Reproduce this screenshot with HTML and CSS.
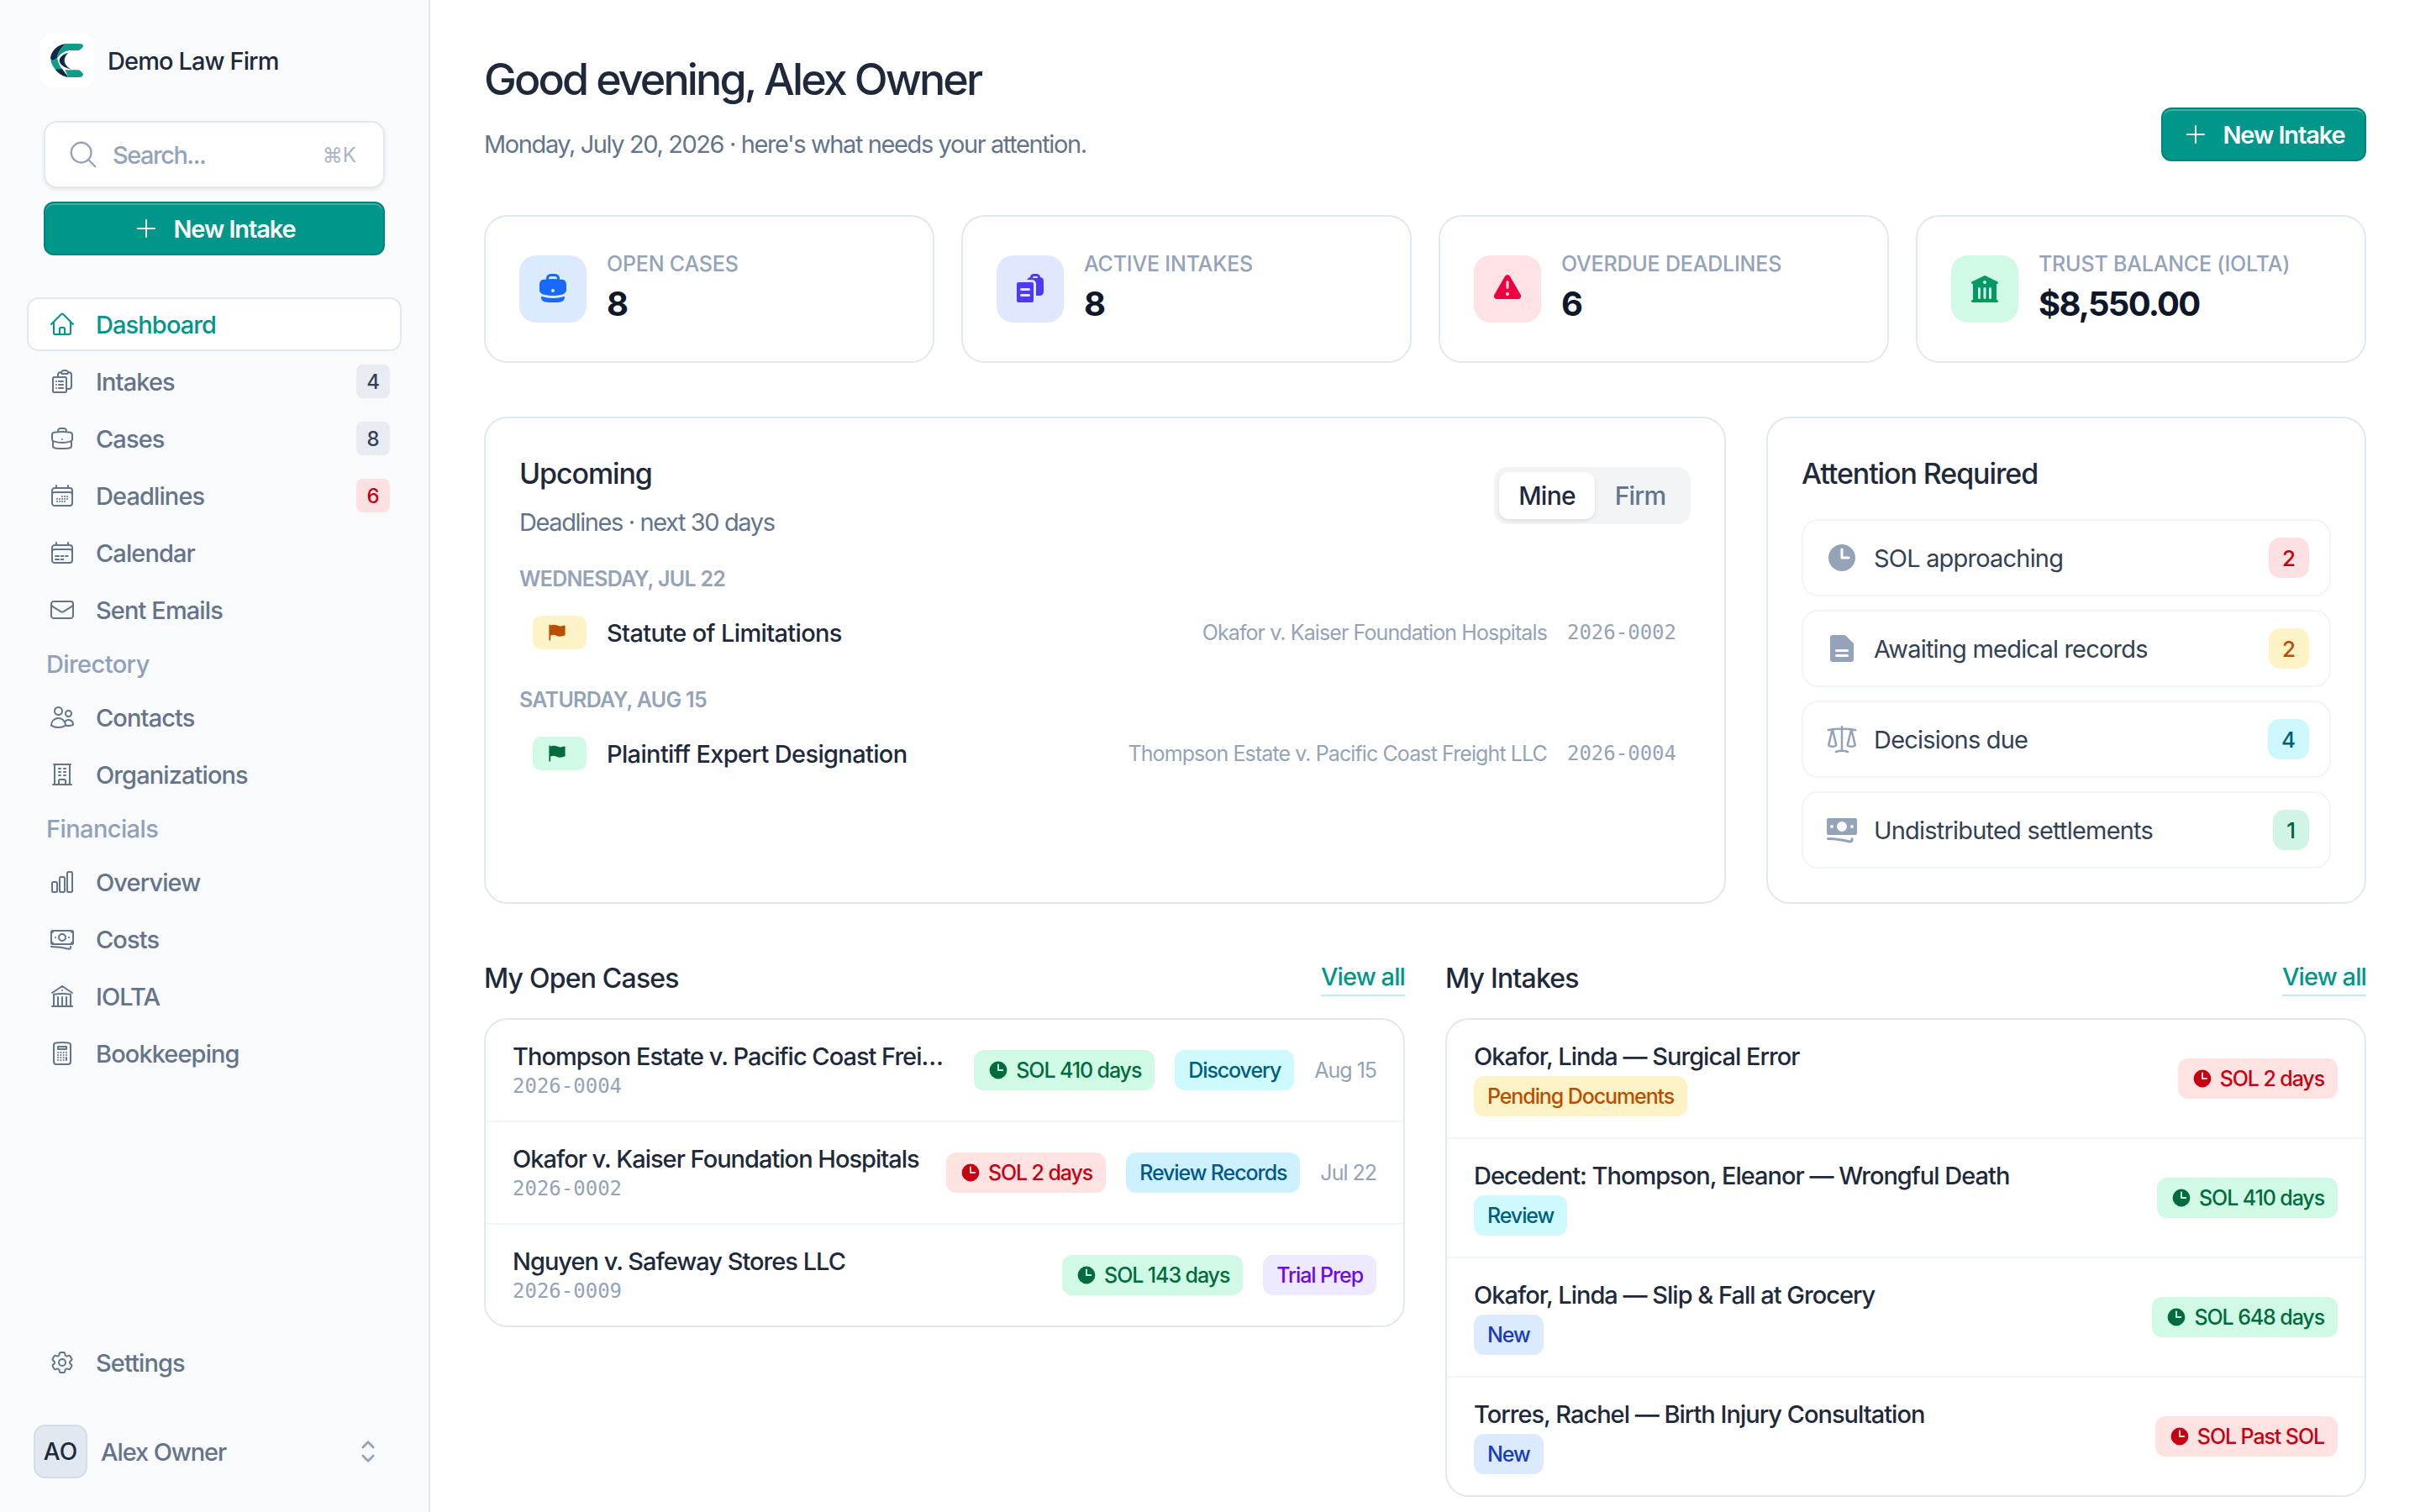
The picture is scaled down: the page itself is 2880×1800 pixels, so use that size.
FILE: index.html

```html
<!DOCTYPE html>
<html lang="en">
<head>
  <meta charset="UTF-8" />
  <title>Dashboard - Demo Law Firm</title>
  <link rel="stylesheet" href="styles.css">
</head>
<body>
<div class="app">
  <aside class="sidebar">
    <div class="brand">
      <div class="brand-logo">
        <svg viewBox="48 48 120 120" width="40" height="40">
          <path fill="#0f9d8a" d="M104 48H150Q165 48 165 56Q165 62 150 72H120C100 72 84 84 72 100C74 80 86 60 104 48Z"/>
          <path fill="#0f2a47" d="M104 48C72 52 50 74 48 100L56 110C58 108 66 104 72 100C74 80 86 60 104 48Z"/>
          <path fill="#0f9d8a" d="M48 100C50 120 60 134 70 146L92 142C82 130 75 116 72 100C66 104 60 108 56 110Z"/>
          <path fill="#0f2a47" d="M66 140C76 154 92 165 112 168C106 158 98 150 90 138Z"/>
          <path fill="#0f9d8a" d="M100 142H150Q160 148 165 156Q165 168 150 168H112C108 160 104 150 100 142Z"/>
          <path fill="#0f2a47" d="M112 80C92 86 80 96 80 108C80 122 98 134 122 140C106 130 98 120 98 108C98 96 104 88 112 80Z"/>
        </svg>
      </div>
      <span class="brand-name">Demo Law Firm</span>
    </div>

    <div class="search">
      <svg class="search-icon" viewBox="0 0 24 24"><path d="m21 21-5.197-5.197m0 0A7.5 7.5 0 1 0 5.196 5.196a7.5 7.5 0 0 0 10.607 10.607Z"/></svg>
      <span class="search-text">Search...</span>
      <span class="search-key">⌘K</span>
    </div>
    <div class="btn btn-wide">
      <svg class="ic-plus" viewBox="0 0 24 24"><path d="M12 4.500v15m7.500-7.500h-15"/></svg>
      New Intake
    </div>

    <nav class="nav">
      <a class="nav-item active"><svg viewBox="0 0 24 24"><path d="m2.250 12 8.954-8.955c.44-.439 1.152-.439 1.591 0L21.750 12M4.500 9.750v10.125c0 .621.504 1.125 1.125 1.125H9.750v-4.875c0-.621.504-1.125 1.125-1.125h2.250c.621 0 1.125.504 1.125 1.125V21h4.125c.621 0 1.125-.504 1.125-1.125V9.750M8.250 21h8.250"/></svg>Dashboard</a>
      <a class="nav-item"><svg viewBox="0 0 24 24"><path d="M9 12h3.750M9 15h3.750M9 18h3.750m3 .75H18a2.250 2.250 0 0 0 2.250-2.250V6.108c0-1.135-.845-2.098-1.976-2.192a48.424 48.424 0 0 0-1.123-.08m-5.801 0c-.065.21-.1.433-.1.664 0 .414.336.75.75.75h4.500a.75.75 0 0 0 .75-.75 2.250 2.250 0 0 0-.1-.664m-5.800 0A2.251 2.251 0 0 1 13.500 2.250H15c1.012 0 1.867.668 2.150 1.586m-5.800 0c-.376.023-.75.05-1.124.08C9.095 4.010 8.250 4.973 8.250 6.108V8.250m0 0H4.875c-.621 0-1.125.504-1.125 1.125v11.250c0 .621.504 1.125 1.125 1.125h9.750c.621 0 1.125-.504 1.125-1.125V9.375c0-.621-.504-1.125-1.125-1.125H8.250ZM6.750 12h.008v.008H6.750V12Zm0 3h.008v.008H6.750V15Zm0 3h.008v.008H6.750V18Z"/></svg>Intakes<span class="nav-badge">4</span></a>
      <a class="nav-item"><svg viewBox="0 0 24 24"><path d="M20.250 14.150v4.250c0 1.094-.787 2.036-1.872 2.180-2.087.277-4.216.42-6.378.42s-4.291-.143-6.378-.42c-1.085-.144-1.872-1.086-1.872-2.180v-4.250m16.500 0a2.180 2.180 0 0 0 .75-1.661V8.706c0-1.081-.768-2.015-1.837-2.175a48.114 48.114 0 0 0-3.413-.387m4.500 8.006c-.194.165-.42.295-.673.38A23.978 23.978 0 0 1 12 15.750c-2.648 0-5.195-.429-7.577-1.220a2.016 2.016 0 0 1-.673-.38m0 0A2.180 2.180 0 0 1 3 12.489V8.706c0-1.081.768-2.015 1.837-2.175a48.111 48.111 0 0 1 3.413-.387m7.500 0V5.250A2.250 2.250 0 0 0 13.500 3h-3a2.250 2.250 0 0 0-2.250 2.250v.894m7.500 0a48.667 48.667 0 0 0-7.500 0M12 12.750h.008v.008H12v-.008Z"/></svg>Cases<span class="nav-badge">8</span></a>
      <a class="nav-item"><svg viewBox="0 0 24 24"><path d="M6.750 3v2.250M17.250 3v2.250M3 18.750V7.500a2.250 2.250 0 0 1 2.250-2.250h13.500A2.250 2.250 0 0 1 21 7.500v11.250m-18 0A2.250 2.250 0 0 0 5.250 21h13.500A2.250 2.250 0 0 0 21 18.750m-18 0v-7.500A2.250 2.250 0 0 1 5.250 9h13.500A2.250 2.250 0 0 1 21 11.250v7.500m-9-6h.008v.008H12v-.008ZM12 15h.008v.008H12V15Zm0 2.250h.008v.008H12v-.008ZM9.750 15h.008v.008H9.750V15Zm0 2.250h.008v.008H9.750v-.008ZM7.500 15h.008v.008H7.500V15Zm0 2.250h.008v.008H7.500v-.008Zm6.750-4.500h.008v.008h-.008v-.008Zm0 2.250h.008v.008h-.008V15Zm0 2.250h.008v.008h-.008v-.008Zm2.250-4.500h.008v.008H16.500v-.008Zm0 2.250h.008v.008H16.500V15Z"/></svg>Deadlines<span class="nav-badge nav-badge-red">6</span></a>
      <a class="nav-item"><svg viewBox="0 0 24 24"><path d="M6.750 3v2.250M17.250 3v2.250M3 18.750V7.500a2.250 2.250 0 0 1 2.250-2.250h13.500A2.250 2.250 0 0 1 21 7.500v11.250m-18 0A2.250 2.250 0 0 0 5.250 21h13.500A2.250 2.250 0 0 0 21 18.750m-18 0v-7.500A2.250 2.250 0 0 1 5.250 9h13.500A2.250 2.250 0 0 1 21 11.250v7.500m-15-3.750h3m2 0h2m2 0h2m-11 3h3m2 0h2"/></svg>Calendar</a>
      <a class="nav-item"><svg viewBox="0 0 24 24"><path d="M21.750 6.750v10.500a2.250 2.250 0 0 1-2.250 2.250h-15a2.250 2.250 0 0 1-2.250-2.250V6.750m19.500 0A2.250 2.250 0 0 0 19.500 4.500h-15a2.250 2.250 0 0 0-2.250 2.250m19.500 0v.243a2.250 2.250 0 0 1-1.070 1.916l-7.500 4.615a2.250 2.250 0 0 1-2.360 0L3.320 8.910a2.250 2.250 0 0 1-1.070-1.916V6.750"/></svg>Sent Emails</a>

      <div class="nav-label">Directory</div>
      <a class="nav-item"><svg viewBox="0 0 24 24"><path d="M15 19.128a9.380 9.380 0 0 0 2.625.372 9.337 9.337 0 0 0 4.121-.952 4.125 4.125 0 0 0-7.533-2.493M15 19.128v-.003c0-1.113-.285-2.160-.786-3.070M15 19.128v.106A12.318 12.318 0 0 1 8.624 21c-2.331 0-4.512-.645-6.374-1.766l-.001-.109a6.375 6.375 0 0 1 11.964-3.070M12 6.375a3.375 3.375 0 1 1-6.750 0 3.375 3.375 0 0 1 6.750 0Zm8.250 2.250a2.625 2.625 0 1 1-5.250 0 2.625 2.625 0 0 1 5.250 0Z"/></svg>Contacts</a>
      <a class="nav-item"><svg viewBox="0 0 24 24"><path d="M3.750 21h16.500M4.500 3h15M5.250 3v18m13.500-18v18M9 6.750h1.500m-1.500 3h1.500m-1.500 3h1.500m3-6H15m-1.500 3H15m-1.500 3H15M9 21v-3.375c0-.621.504-1.125 1.125-1.125h3.750c.621 0 1.125.504 1.125 1.125V21"/></svg>Organizations</a>

      <div class="nav-label">Financials</div>
      <a class="nav-item"><svg viewBox="0 0 24 24"><path d="M3 13.125C3 12.504 3.504 12 4.125 12h2.250c.621 0 1.125.504 1.125 1.125v6.750C7.500 20.496 6.996 21 6.375 21h-2.250A1.125 1.125 0 0 1 3 19.875v-6.750ZM9.750 8.625c0-.621.504-1.125 1.125-1.125h2.250c.621 0 1.125.504 1.125 1.125v11.250c0 .621-.504 1.125-1.125 1.125h-2.250a1.125 1.125 0 0 1-1.125-1.125V8.625ZM16.500 4.125c0-.621.504-1.125 1.125-1.125h2.250C20.496 3 21 3.504 21 4.125v15.750c0 .621-.504 1.125-1.125 1.125h-2.250a1.125 1.125 0 0 1-1.125-1.125V4.125Z"/></svg>Overview</a>
      <a class="nav-item"><svg viewBox="0 0 24 24"><path d="M2.250 18.750a60.070 60.070 0 0 1 15.797 2.101c.727.198 1.453-.342 1.453-1.096V18.750M3.750 4.500v.75A.75.75 0 0 1 3 6h-.75m0 0v-.375c0-.621.504-1.125 1.125-1.125H20.250M2.250 6v9m18-10.500v.75c0 .414.336.75.75.75h.75m-1.500-1.500h.375c.621 0 1.125.504 1.125 1.125v9.750c0 .621-.504 1.125-1.125 1.125h-.375m1.500-1.500H21a.75.75 0 0 0-.75.75v.75m0 0H3.750m0 0h-.375a1.125 1.125 0 0 1-1.125-1.125V15m1.500 1.500v-.75A.75.75 0 0 0 3 15h-.75M15 10.500a3 3 0 1 1-6 0 3 3 0 0 1 6 0Zm3 0h.008v.008H18V10.500Zm-12 0h.008v.008H6V10.500Z"/></svg>Costs</a>
      <a class="nav-item"><svg viewBox="0 0 24 24"><path d="M12 21v-8.250M15.750 21v-8.250M8.250 21v-8.250M3 9l9-6 9 6m-1.500 12V10.332A48.360 48.360 0 0 0 12 9.750c-2.551 0-5.056.2-7.500.582V21M3 21h18M12 6.750h.008v.008H12V6.750Z"/></svg>IOLTA</a>
      <a class="nav-item"><svg viewBox="0 0 24 24"><path d="M15.750 15.750V18m-7.500-6.750h.008v.008H8.250v-.008Zm0 2.250h.008v.008H8.250V13.500Zm0 2.250h.008v.008H8.250v-.008Zm0 2.250h.008v.008H8.250V18Zm2.498-6.750h.007v.008h-.007v-.008Zm0 2.250h.007v.008h-.007V13.500Zm0 2.250h.007v.008h-.007v-.008Zm0 2.250h.007v.008h-.007V18Zm2.504-6.750h.008v.008h-.008v-.008Zm0 2.250h.008v.008h-.008V13.500Zm0 2.250h.008v.008h-.008v-.008Zm0 2.250h.008v.008h-.008V18Zm2.498-6.750h.008v.008h-.008v-.008Zm0 2.250h.008v.008h-.008V13.500ZM8.250 6h7.500v2.250h-7.500V6ZM12 2.250c-1.892 0-3.758.11-5.593.322C5.307 2.700 4.500 3.650 4.500 4.757V19.500a2.250 2.250 0 0 0 2.250 2.250h10.500a2.250 2.250 0 0 0 2.250-2.250V4.757c0-1.108-.806-2.057-1.907-2.185A48.507 48.507 0 0 0 12 2.250Z"/></svg>Bookkeeping</a>
    </nav>

    <div class="sidebar-foot">
      <a class="nav-item"><svg viewBox="0 0 24 24"><path d="M9.594 3.940c.09-.542.56-.94 1.110-.94h2.593c.55 0 1.020.398 1.110.94l.213 1.281c.063.374.313.686.645.87.074.04.147.083.22.127.325.196.72.257 1.075.124l1.217-.456a1.125 1.125 0 0 1 1.370.49l1.296 2.247a1.125 1.125 0 0 1-.26 1.431l-1.003.827c-.293.241-.438.613-.43.992a7.723 7.723 0 0 1 0 .255c-.008.378.137.75.43.991l1.004.827c.424.35.534.955.26 1.430l-1.298 2.247a1.125 1.125 0 0 1-1.369.491l-1.217-.456c-.355-.133-.75-.072-1.076.124a6.470 6.470 0 0 1-.22.128c-.331.183-.581.495-.644.869l-.213 1.281c-.09.543-.56.94-1.110.94h-2.594c-.55 0-1.019-.398-1.110-.94l-.213-1.281c-.062-.374-.312-.686-.644-.87a6.520 6.520 0 0 1-.22-.127c-.325-.196-.72-.257-1.076-.124l-1.217.456a1.125 1.125 0 0 1-1.369-.49l-1.297-2.247a1.125 1.125 0 0 1 .26-1.431l1.004-.827c.292-.24.437-.613.43-.991a6.932 6.932 0 0 1 0-.255c.007-.38-.138-.751-.43-.992l-1.004-.827a1.125 1.125 0 0 1-.26-1.430l1.297-2.247a1.125 1.125 0 0 1 1.370-.491l1.216.456c.356.133.751.072 1.076-.124.072-.044.146-.086.22-.128.332-.183.582-.495.644-.869l.214-1.280Z"/><path d="M15 12a3 3 0 1 1-6 0 3 3 0 0 1 6 0Z"/></svg>Settings</a>
      <div class="user">
        <div class="avatar">AO</div>
        <span class="user-name">Alex Owner</span>
        <svg class="user-chev" viewBox="0 0 24 24"><path d="M8.250 15 12 18.750 15.750 15m-7.500-6L12 5.250 15.750 9"/></svg>
      </div>
    </div>
  </aside>

  <main class="main">
    <header class="page-head">
      <div>
        <h1>Good evening, Alex Owner</h1>
        <p class="page-sub">Monday, July 20, 2026 · here's what needs your attention.</p>
      </div>
      <div class="btn btn-top">
        <svg class="ic-plus" viewBox="0 0 24 24"><path d="M12 4.500v15m7.500-7.500h-15"/></svg>
        New Intake
      </div>
    </header>

    <section class="stats">
      <div class="stat">
        <div class="stat-icon blue"><svg viewBox="0 0 20 20"><path fill-rule="evenodd" d="M6 3.750A2.750 2.750 0 0 1 8.750 1h2.500A2.750 2.750 0 0 1 14 3.750v.443c.572.055 1.140.122 1.706.2C17.053 4.582 18 5.750 18 7.070v3.469c0 1.126-.694 2.191-1.830 2.540-1.952.599-4.024.921-6.170.921s-4.219-.322-6.170-.921C2.694 12.730 2 11.665 2 10.539V7.070c0-1.321.947-2.489 2.294-2.676A41.047 41.047 0 0 1 6 4.193V3.750Zm6.500 0v.325a41.622 41.622 0 0 0-5 0V3.750c0-.69.56-1.250 1.250-1.250h2.500c.69 0 1.250.56 1.250 1.250ZM10 10a1 1 0 0 0-1 1v.01a1 1 0 0 0 1 1h.01a1 1 0 0 0 1-1V11a1 1 0 0 0-1-1H10Z"/><path d="M3 15.055v-.684c.126.053.255.1.39.142 2.092.642 4.313.987 6.610.987 2.297 0 4.518-.345 6.610-.987.135-.041.264-.089.39-.142v.684c0 1.347-.985 2.530-2.363 2.686a41.454 41.454 0 0 1-9.274 0C3.985 17.585 3 16.402 3 15.055Z"/></svg></div>
        <div><div class="stat-label">OPEN CASES</div><div class="stat-value">8</div></div>
      </div>
      <div class="stat">
        <div class="stat-icon indigo"><svg viewBox="0 0 20 20"><path fill-rule="evenodd" d="M15.988 3.012A2.250 2.250 0 0 1 18 5.250v6.500A2.250 2.250 0 0 1 15.750 14H13.500V7A2.500 2.500 0 0 0 11 4.500H8.128a2.252 2.252 0 0 1 1.884-1.488A2.250 2.250 0 0 1 12.250 1h1.500a2.250 2.250 0 0 1 2.238 2.012ZM11.500 3.250a.75.75 0 0 1 .75-.75h1.500a.75.75 0 0 1 .75.75v.25h-3v-.25Z"/><path fill-rule="evenodd" d="M2 7a1 1 0 0 1 1-1h8a1 1 0 0 1 1 1v10a1 1 0 0 1-1 1H3a1 1 0 0 1-1-1V7Zm2 3.250a.75.75 0 0 1 .75-.75h4.500a.75.75 0 0 1 0 1.500h-4.500a.75.75 0 0 1-.75-.75Zm0 3.500a.75.75 0 0 1 .75-.75h4.500a.75.75 0 0 1 0 1.500h-4.500a.75.75 0 0 1-.75-.75Z"/></svg></div>
        <div><div class="stat-label">ACTIVE INTAKES</div><div class="stat-value">8</div></div>
      </div>
      <div class="stat">
        <div class="stat-icon rose"><svg viewBox="0 0 20 20"><path fill-rule="evenodd" d="M8.485 2.495c.673-1.167 2.357-1.167 3.030 0l6.280 10.875c.673 1.167-.17 2.625-1.516 2.625H3.720c-1.347 0-2.189-1.458-1.515-2.625L8.485 2.495ZM10 5a.75.75 0 0 1 .75.75v3.500a.75.75 0 0 1-1.500 0v-3.500A.75.75 0 0 1 10 5Zm0 9a1 1 0 1 0 0-2 1 1 0 0 0 0 2Z"/></svg></div>
        <div><div class="stat-label">OVERDUE DEADLINES</div><div class="stat-value">6</div></div>
      </div>
      <div class="stat">
        <div class="stat-icon green"><svg viewBox="0 0 20 20"><path fill-rule="evenodd" d="M9.674 2.075a.75.75 0 0 1 .652 0l7.250 3.500A.75.75 0 0 1 17 6.957V16.500h.25a.75.75 0 0 1 0 1.500H2.750a.75.75 0 0 1 0-1.500H3V6.957a.75.75 0 0 1-.576-1.382l7.250-3.500ZM11 6a1 1 0 1 1-2 0 1 1 0 0 1 2 0ZM7.500 9.750a.75.75 0 0 0-1.500 0v5.500a.75.75 0 0 0 1.500 0v-5.500Zm3.250 0a.75.75 0 0 0-1.500 0v5.500a.75.75 0 0 0 1.500 0v-5.500Zm3.250 0a.75.75 0 0 0-1.500 0v5.500a.75.75 0 0 0 1.500 0v-5.500Z"/></svg></div>
        <div><div class="stat-label">TRUST BALANCE (IOLTA)</div><div class="stat-value">$8,550.00</div></div>
      </div>
    </section>

    <section class="middle">
      <div class="card upcoming">
        <div class="upcoming-head">
          <div>
            <h2>Upcoming</h2>
            <p class="upcoming-sub">Deadlines · next 30 days</p>
          </div>
          <div class="toggle"><span class="toggle-on">Mine</span><span class="toggle-off">Firm</span></div>
        </div>
        <div class="day">WEDNESDAY, JUL 22</div>
        <div class="deadline">
          <span class="flag amber"><svg viewBox="0 0 20 20"><path d="M3.500 2.750a.75.75 0 0 0-1.500 0v14.500a.75.75 0 0 0 1.500 0v-4.392l1.657-.348a6.449 6.449 0 0 1 4.271.572 7.948 7.948 0 0 0 5.965.524l2.078-.64A.75.75 0 0 0 18 12.250v-8.500a.75.75 0 0 0-.904-.734l-2.380.501a7.250 7.250 0 0 1-4.186-.363l-.502-.2a8.750 8.750 0 0 0-5.053-.439l-1.475.31V2.750Z"/></svg></span>
          <span class="deadline-name">Statute of Limitations</span>
          <span class="deadline-case">Okafor v. Kaiser Foundation Hospitals</span>
          <span class="mono">2026-0002</span>
        </div>
        <div class="day day-next">SATURDAY, AUG 15</div>
        <div class="deadline">
          <span class="flag mint"><svg viewBox="0 0 20 20"><path d="M3.500 2.750a.75.75 0 0 0-1.500 0v14.500a.75.75 0 0 0 1.500 0v-4.392l1.657-.348a6.449 6.449 0 0 1 4.271.572 7.948 7.948 0 0 0 5.965.524l2.078-.64A.75.75 0 0 0 18 12.250v-8.500a.75.75 0 0 0-.904-.734l-2.380.501a7.250 7.250 0 0 1-4.186-.363l-.502-.2a8.750 8.750 0 0 0-5.053-.439l-1.475.31V2.750Z"/></svg></span>
          <span class="deadline-name">Plaintiff Expert Designation</span>
          <span class="deadline-case">Thompson Estate v. Pacific Coast Freight LLC</span>
          <span class="mono">2026-0004</span>
        </div>
      </div>

      <div class="card attention">
        <h2>Attention Required</h2>
        <div class="att-list">
          <div class="att-row">
            <svg class="att-icon" viewBox="0 0 20 20"><path fill-rule="evenodd" d="M10 18a8 8 0 1 0 0-16 8 8 0 0 0 0 16Zm.75-13a.75.75 0 0 0-1.500 0v5c0 .414.336.75.75.75h4a.75.75 0 0 0 0-1.500h-3.250V5Z"/></svg>
            <span class="att-text">SOL approaching</span><span class="att-count c-red">2</span>
          </div>
          <div class="att-row">
            <svg class="att-icon" viewBox="0 0 20 20"><path fill-rule="evenodd" d="M4.500 2A1.500 1.500 0 0 0 3 3.500v13A1.500 1.500 0 0 0 4.500 18h11a1.500 1.500 0 0 0 1.500-1.500V7.621a1.500 1.500 0 0 0-.44-1.060l-4.120-4.122A1.500 1.500 0 0 0 11.378 2H4.500Zm2.250 8.500a.75.75 0 0 0 0 1.500h6.500a.75.75 0 0 0 0-1.500h-6.500Zm0 3a.75.75 0 0 0 0 1.500h6.500a.75.75 0 0 0 0-1.500h-6.500Z"/></svg>
            <span class="att-text">Awaiting medical records</span><span class="att-count c-amber">2</span>
          </div>
          <div class="att-row">
            <svg class="att-icon att-line" viewBox="0 0 24 24"><path d="M12 3v17.250m0 0c-1.472 0-2.882.265-4.185.75M12 20.250c1.472 0 2.882.265 4.185.75M18.750 4.970A48.416 48.416 0 0 0 12 4.500c-2.291 0-4.545.16-6.750.47m13.500 0c1.010.143 2.010.317 3 .52m-3-.52 2.620 10.726c.122.499-.106 1.028-.589 1.202a5.988 5.988 0 0 1-2.031.352 5.988 5.988 0 0 1-2.031-.352c-.483-.174-.711-.703-.589-1.202L18.750 4.971Zm-16.500.52c.99-.203 1.990-.377 3-.52m0 0 2.620 10.726c.122.499-.106 1.028-.589 1.202a5.989 5.989 0 0 1-2.031.352 5.989 5.989 0 0 1-2.031-.352c-.483-.174-.711-.703-.589-1.202L5.250 4.971Z"/></svg>
            <span class="att-text">Decisions due</span><span class="att-count c-cyan">4</span>
          </div>
          <div class="att-row">
            <svg class="att-icon" viewBox="0 0 20 20"><path fill-rule="evenodd" d="M1 4a1 1 0 0 1 1-1h16a1 1 0 0 1 1 1v8a1 1 0 0 1-1 1H2a1 1 0 0 1-1-1V4Zm12 4a3 3 0 1 1-6 0 3 3 0 0 1 6 0ZM4 9a1 1 0 1 0 0-2 1 1 0 0 0 0 2Zm13-1a1 1 0 1 1-2 0 1 1 0 0 1 2 0ZM1.750 14.500a.75.75 0 0 0 0 1.500c4.417 0 8.693.603 12.749 1.730 1.111.309 2.251-.512 2.251-1.696v-.784a.75.75 0 0 0-1.500 0v.784a.272.272 0 0 1-.35.25A49.043 49.043 0 0 0 1.750 14.500Z"/></svg>
            <span class="att-text">Undistributed settlements</span><span class="att-count c-green">1</span>
          </div>
        </div>
      </div>
    </section>

    <section class="lists">
      <div>
        <div class="list-head"><h3>My Open Cases</h3><a class="view-all">View all</a></div>
        <div class="list-card">
          <div class="case-row">
            <div class="case-main"><div class="case-title">Thompson Estate v. Pacific Coast Freight LLC</div><div class="mono">2026-0004</div></div>
            <span class="pill p-green"><svg viewBox="0 0 20 20"><path fill-rule="evenodd" d="M10 18a8 8 0 1 0 0-16 8 8 0 0 0 0 16Zm.75-13a.75.75 0 0 0-1.500 0v5c0 .414.336.75.75.75h4a.75.75 0 0 0 0-1.500h-3.250V5Z"/></svg>SOL 410 days</span>
            <span class="pill p-cyan">Discovery</span>
            <span class="case-date">Aug 15</span>
          </div>
          <div class="case-row">
            <div class="case-main"><div class="case-title">Okafor v. Kaiser Foundation Hospitals</div><div class="mono">2026-0002</div></div>
            <span class="pill p-red"><svg viewBox="0 0 20 20"><path fill-rule="evenodd" d="M10 18a8 8 0 1 0 0-16 8 8 0 0 0 0 16Zm.75-13a.75.75 0 0 0-1.500 0v5c0 .414.336.75.75.75h4a.75.75 0 0 0 0-1.500h-3.250V5Z"/></svg>SOL 2 days</span>
            <span class="pill p-sky">Review Records</span>
            <span class="case-date">Jul 22</span>
          </div>
          <div class="case-row">
            <div class="case-main"><div class="case-title">Nguyen v. Safeway Stores LLC</div><div class="mono">2026-0009</div></div>
            <span class="pill p-green"><svg viewBox="0 0 20 20"><path fill-rule="evenodd" d="M10 18a8 8 0 1 0 0-16 8 8 0 0 0 0 16Zm.75-13a.75.75 0 0 0-1.500 0v5c0 .414.336.75.75.75h4a.75.75 0 0 0 0-1.500h-3.250V5Z"/></svg>SOL 143 days</span>
            <span class="pill p-purple">Trial Prep</span>
          </div>
        </div>
      </div>

      <div>
        <div class="list-head"><h3>My Intakes</h3><a class="view-all">View all</a></div>
        <div class="list-card">
          <div class="intake-row">
            <div class="case-main"><div class="case-title">Okafor, Linda — Surgical Error</div><span class="pill p-amber">Pending Documents</span></div>
            <span class="pill p-red"><svg viewBox="0 0 20 20"><path fill-rule="evenodd" d="M10 18a8 8 0 1 0 0-16 8 8 0 0 0 0 16Zm.75-13a.75.75 0 0 0-1.500 0v5c0 .414.336.75.75.75h4a.75.75 0 0 0 0-1.500h-3.250V5Z"/></svg>SOL 2 days</span>
          </div>
          <div class="intake-row">
            <div class="case-main"><div class="case-title">Decedent: Thompson, Eleanor — Wrongful Death</div><span class="pill p-cyan">Review</span></div>
            <span class="pill p-green"><svg viewBox="0 0 20 20"><path fill-rule="evenodd" d="M10 18a8 8 0 1 0 0-16 8 8 0 0 0 0 16Zm.75-13a.75.75 0 0 0-1.500 0v5c0 .414.336.75.75.75h4a.75.75 0 0 0 0-1.500h-3.250V5Z"/></svg>SOL 410 days</span>
          </div>
          <div class="intake-row">
            <div class="case-main"><div class="case-title">Okafor, Linda — Slip &amp; Fall at Grocery</div><span class="pill p-blue">New</span></div>
            <span class="pill p-green"><svg viewBox="0 0 20 20"><path fill-rule="evenodd" d="M10 18a8 8 0 1 0 0-16 8 8 0 0 0 0 16Zm.75-13a.75.75 0 0 0-1.500 0v5c0 .414.336.75.75.75h4a.75.75 0 0 0 0-1.500h-3.250V5Z"/></svg>SOL 648 days</span>
          </div>
          <div class="intake-row">
            <div class="case-main"><div class="case-title">Torres, Rachel — Birth Injury Consultation</div><span class="pill p-blue">New</span></div>
            <span class="pill p-red"><svg viewBox="0 0 20 20"><path fill-rule="evenodd" d="M10 18a8 8 0 1 0 0-16 8 8 0 0 0 0 16Zm.75-13a.75.75 0 0 0-1.500 0v5c0 .414.336.75.75.75h4a.75.75 0 0 0 0-1.500h-3.250V5Z"/></svg>SOL Past SOL</span>
          </div>
        </div>
      </div>
    </section>
  </main>
</div>
</body>
</html>
```

FILE: styles.css

```css
* {
  box-sizing: border-box;
}
body {
  margin: 0;
  background: #fff;
  font-family: Inter, "Noto Sans", sans-serif;
  color: #1e293b;
}
h1, h2, h3, p {
  margin: 0;
}
svg {
  flex: none;
  display: block;
}

.app {
  display: flex;
  height: 1800px;
  overflow: hidden;
}

/* sidebar */
.sidebar {
  width: 512px;
  flex: none;
  display: flex;
  flex-direction: column;
  background: #f8fafc;
  border-right: 2px solid #e2e8f0;
  padding: 40px 32px 40px 32px;
}
.brand {
  display: flex;
  align-items: center;
  gap: 16px;
  margin-left: 16px;
  height: 64px;
}
.brand-logo {
  width: 64px;
  height: 64px;
  background: #fff;
  border-radius: 14px;
  display: flex;
  align-items: center;
  justify-content: center;
}
.brand-name {
  font-size: 29px;
  font-weight: 500;
  letter-spacing: -0.9px;
  color: #1e293b;
}
.search {
  display: flex;
  align-items: center;
  width: 406px;
  height: 80px;
  margin: 40px 0 0 20px;
  padding: 0 32px 0 26px;
  background: #fff;
  border: 2px solid #e2e8f0;
  border-radius: 16px;
  box-shadow: 0 2px 4px rgba(15, 23, 42, 0.08);
}
.search-icon {
  width: 38px;
  height: 38px;
  fill: none;
  stroke: #94a3b8;
  stroke-width: 1.5;
  stroke-linecap: round;
}
.search-text {
  margin-left: 16px;
  font-size: 29px;
  font-weight: 500;
  letter-spacing: -1.5px;
  color: #94a3b8;
}
.search-key {
  margin-left: auto;
  font-size: 24px;
  color: #a8b5c7;
}
.btn {
  display: flex;
  align-items: center;
  justify-content: center;
  gap: 16px;
  height: 64px;
  background: #009689;
  border: 2px solid #008578;
  border-radius: 12px;
  box-shadow: inset 0 2px 0 rgba(255, 255, 255, 0.25);
  color: #fff;
  font-size: 29px;
  font-weight: 600;
  letter-spacing: -1.1px;
}
.btn-wide {
  width: 406px;
  margin: 16px 0 0 20px;
}
.btn-top {
  width: 244px;
  align-self: flex-end;
}
.ic-plus {
  width: 32px;
  height: 32px;
  fill: none;
  stroke: #fff;
  stroke-width: 1.5;
  stroke-linecap: round;
}
.nav {
  display: flex;
  flex-direction: column;
  gap: 4px;
  margin-top: 50px;
  flex: 1;
}
.nav-item {
  display: flex;
  align-items: center;
  gap: 24px;
  height: 64px;
  padding: 0 12px 0 24px;
  border: 2px solid transparent;
  border-radius: 14px;
  font-size: 29px;
  font-weight: 500;
  letter-spacing: -0.9px;
  color: #64748b;
}
.nav-item svg {
  width: 32px;
  height: 32px;
  fill: none;
  stroke: #64748b;
  stroke-width: 1.5;
  stroke-linecap: round;
  stroke-linejoin: round;
}
.nav-item.active {
  background: #fff;
  border-color: #e2e8f0;
  color: #009689;
}
.nav-item.active svg {
  stroke: #009689;
}
.nav-badge {
  margin-left: auto;
  width: 40px;
  height: 40px;
  display: flex;
  align-items: center;
  justify-content: center;
  border-radius: 8px;
  background: #e8ecf2;
  color: #334155;
  font-size: 24px;
  letter-spacing: 0;
}
.nav-badge-red {
  background: #fde0e2;
  color: #c70011;
}
.nav-label {
  height: 56px;
  padding-left: 23px;
  display: flex;
  align-items: center;
  font-size: 29px;
  font-weight: 500;
  letter-spacing: -0.6px;
  color: #8fa1bb;
}
.sidebar-foot {
  display: flex;
  flex-direction: column;
}
.user {
  display: flex;
  align-items: center;
  height: 64px;
  margin: 42px 0 0 8px;
}
.avatar {
  width: 64px;
  height: 64px;
  display: flex;
  align-items: center;
  justify-content: center;
  background: #e2e8f0;
  border: 2px solid #d5dde8;
  border-radius: 14px;
  color: #1e293b;
  font-size: 28px;
  font-weight: 500;
}
.user-name {
  margin-left: 16px;
  font-size: 29px;
  font-weight: 500;
  letter-spacing: -1.1px;
  color: #64748b;
}
.user-chev {
  width: 40px;
  height: 40px;
  margin-left: auto;
  margin-right: 20px;
  fill: none;
  stroke: #94a3b8;
  stroke-width: 1.6;
  stroke-linecap: round;
  stroke-linejoin: round;
}

/* main */
.main {
  flex: 1;
  min-width: 0;
  padding: 64px 64px 0;
}
.page-head {
  display: flex;
  justify-content: space-between;
  align-items: flex-start;
  height: 128px;
}
h1 {
  font-size: 52px;
  line-height: 62px;
  font-weight: 500;
  letter-spacing: -2.9px;
  color: #1e293b;
}
.page-sub {
  margin-top: 26px;
  font-size: 29px;
  line-height: 40px;
  letter-spacing: -1.4px;
  color: #64748b;
}
.stats {
  display: grid;
  grid-template-columns: repeat(4, 1fr);
  gap: 32px;
  margin-top: 64px;
}
.stat {
  display: flex;
  gap: 24px;
  height: 176px;
  padding: 46px 40px;
  border: 2px solid #e2e8f0;
  border-radius: 28px;
}
.stat-icon {
  width: 80px;
  height: 80px;
  border-radius: 20px;
  display: flex;
  align-items: center;
  justify-content: center;
  flex: none;
}
.stat-icon svg {
  width: 40px;
  height: 40px;
}
.blue { background: #dbeafe; fill: #1769ff; }
.indigo { background: #e0e7ff; fill: #4f39f6; }
.rose { background: #ffe2e5; fill: #ec003f; }
.green { background: #d0fae5; fill: #009966; }
.stat-label {
  font-size: 25px;
  line-height: 20px;
  font-weight: 500;
  letter-spacing: -0.2px;
  color: #94a3b8;
}
.stat-value {
  margin-top: 16px;
  font-size: 40px;
  line-height: 44px;
  font-weight: 700;
  letter-spacing: -1.8px;
  color: #0f172a;
}
.middle {
  display: grid;
  grid-template-columns: minmax(0, 1fr) 714px;
  gap: 48px;
  margin-top: 64px;
}
.card {
  height: 580px;
  padding: 44px 40px;
  border: 2px solid #e2e8f0;
  border-radius: 28px;
}
h2 {
  font-size: 34px;
  line-height: 44px;
  font-weight: 500;
  letter-spacing: -1.1px;
  color: #1e293b;
}
.upcoming-head {
  display: flex;
  justify-content: space-between;
  align-items: flex-start;
}
.upcoming-sub {
  margin-top: 16px;
  font-size: 29px;
  line-height: 40px;
  letter-spacing: -1.4px;
  color: #64748b;
}
.toggle {
  display: flex;
  align-items: center;
  height: 68px;
  margin: 14px 0 0;
  padding: 6px 6px;
  background: #f3f4f6;
  border-radius: 16px;
  font-size: 30px;
  font-weight: 500;
  letter-spacing: -0.8px;
}
.toggle-on {
  width: 114px;
  height: 56px;
  display: flex;
  align-items: center;
  justify-content: center;
  background: #fff;
  border-radius: 12px;
  box-shadow: 0 2px 4px rgba(15, 23, 42, 0.1);
  color: #1e293b;
}
.toggle-off {
  width: 108px;
  text-align: center;
  color: #64748b;
}
.day {
  margin-top: 31px;
  font-size: 25px;
  line-height: 32px;
  font-weight: 600;
  letter-spacing: -0.7px;
  color: #94a3b8;
}
.day-next {
  margin-top: 40px;
}
.deadline {
  display: flex;
  align-items: center;
  height: 48px;
  margin-top: 24px;
  padding: 0 17px 0 16px;
}
.flag {
  width: 64px;
  height: 40px;
  border-radius: 10px;
  display: flex;
  align-items: center;
  justify-content: center;
  flex: none;
}
.flag svg {
  width: 24px;
  height: 24px;
  margin-right: 6px;
}
.amber { background: #fef3c6; fill: #bb4d00; }
.mint { background: #d0fae5; fill: #006b3c; }
.deadline-name {
  margin-left: 24px;
  font-size: 29px;
  font-weight: 500;
  letter-spacing: -0.65px;
  color: #1e293b;
}
.deadline-case {
  margin-left: auto;
  margin-right: 24px;
  font-size: 25px;
  letter-spacing: -0.9px;
  color: #94a3b8;
}
.mono {
  font-family: "DejaVu Sans Mono", monospace;
  font-size: 24px;
  line-height: 32px;
  color: #94a3b8;
}
.att-list {
  display: flex;
  flex-direction: column;
  gap: 16px;
  margin-top: 32px;
}
.att-row {
  display: flex;
  align-items: center;
  height: 92px;
  padding: 0 24px 0 26px;
  border: 2px solid #f1f5f9;
  border-radius: 20px;
}
.att-icon {
  width: 40px;
  height: 40px;
  fill: #94a3b8;
}
.att-line {
  fill: none;
  stroke: #94a3b8;
  stroke-width: 1.5;
  stroke-linecap: round;
  stroke-linejoin: round;
}
.att-text {
  margin-left: 18px;
  font-size: 29px;
  letter-spacing: -0.8px;
  color: #334155;
}
.att-count {
  margin-left: auto;
  height: 48px;
  padding: 0 16px;
  display: flex;
  align-items: center;
  border-radius: 14px;
  font-size: 26px;
  font-weight: 500;
}
.c-red { background: #fde0e2; color: #c70011; }
.c-amber { background: #fef3c6; color: #bb4d00; }
.c-cyan { background: #cef6fd; color: #005f78; }
.c-green { background: #d0f5e5; color: #006045; }

.lists {
  display: grid;
  grid-template-columns: repeat(2, minmax(0, 1fr));
  gap: 48px;
  margin-top: 64px;
}
.list-head {
  display: flex;
  justify-content: space-between;
  align-items: center;
  height: 48px;
  margin-bottom: 24px;
}
h3 {
  font-size: 32px;
  font-weight: 500;
  letter-spacing: -0.8px;
  color: #1e293b;
}
.view-all {
  margin-top: 3px;
  padding-bottom: 4px;
  border-bottom: 2px solid #c5ebe4;
  font-size: 29px;
  font-weight: 500;
  letter-spacing: -0.9px;
  color: #009689;
}
.list-card {
  border: 2px solid #e2e8f0;
  border-radius: 28px;
}
.case-row, .intake-row {
  display: flex;
  align-items: center;
  gap: 24px;
  padding: 0 32px;
  border-top: 2px solid #f1f5f9;
}
.case-row:first-child, .intake-row:first-child {
  border-top: 0;
}
.case-row {
  height: 122px;
}
.case-row:first-child {
  height: 120px;
}
.intake-row {
  height: 142px;
}
.intake-row:first-child {
  height: 140px;
}
.case-main {
  flex: 1;
  min-width: 0;
}
.case-title {
  font-size: 29px;
  line-height: 38px;
  font-weight: 500;
  letter-spacing: -1px;
  color: #1e293b;
  white-space: nowrap;
  overflow: hidden;
  text-overflow: ellipsis;
}
.intake-row .case-main .pill {
  margin-top: 4px;
}
.pill {
  display: inline-flex;
  align-items: center;
  gap: 8px;
  height: 48px;
  padding: 0 16px;
  border-radius: 12px;
  font-size: 25px;
  font-weight: 500;
  letter-spacing: -1.1px;
  white-space: nowrap;
  flex: none;
}
.pill svg {
  width: 26px;
  height: 26px;
  fill: currentColor;
}
.p-green { background: #d0fae5; color: #006b3c; }
.p-red { background: #ffe2e2; color: #c70011; }
.p-cyan { background: #cefafe; color: #005f78; }
.p-sky { background: #cdf1fe; color: #00598a; }
.p-purple { background: #ede9fe; color: #7008e7; }
.p-amber { background: #fef3c6; color: #bb4d00; }
.p-blue { background: #dbeafe; color: #193cb8; }
.case-date {
  font-size: 25px;
  letter-spacing: -1px;
  color: #94a3b8;
  flex: none;
}
```
